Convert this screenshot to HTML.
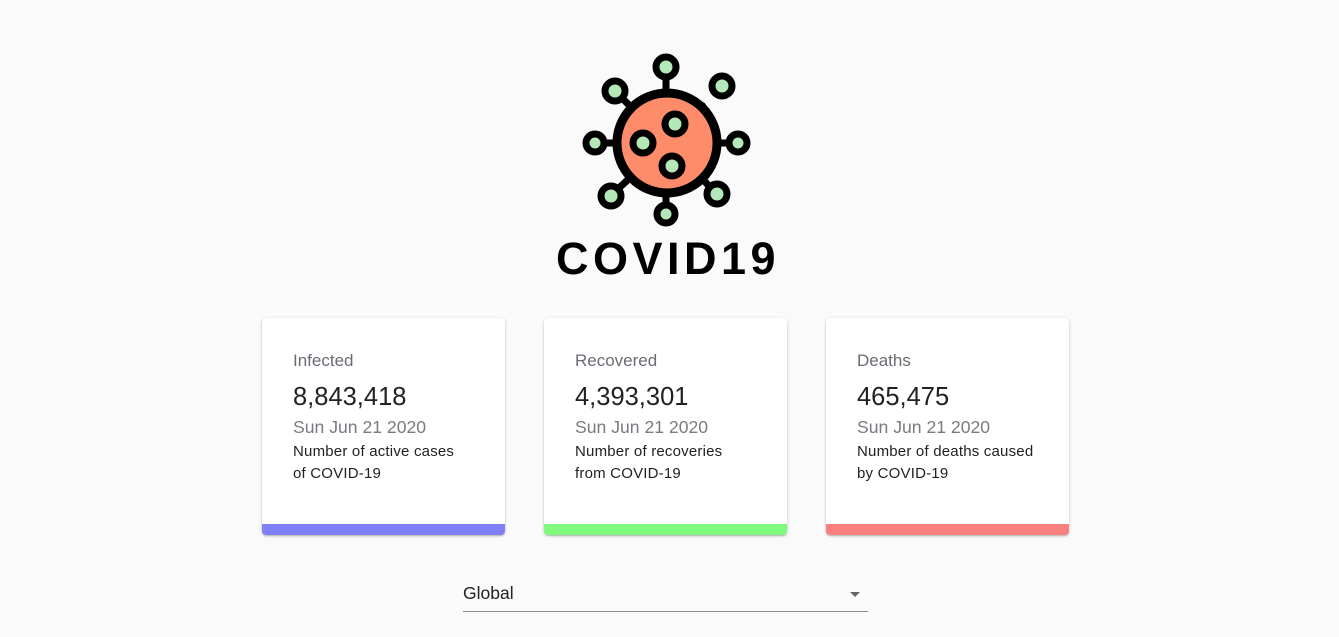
<!DOCTYPE html>
<html><head><style>
body{margin:0;background:#fafafa;font-family:"Liberation Sans",Roboto,sans-serif;width:1339px;height:637px;overflow:hidden;position:relative}
.card{position:absolute;top:318px;width:243px;height:217px;background:#fff;border-radius:4px;box-shadow:0 1px 3px rgba(0,0,0,.2),0 1px 1px rgba(0,0,0,.14);overflow:hidden}
.card .in{padding:33px 31px 0}
.t{color:#6b6b74;font-size:17px;line-height:20px}
.n{color:#222;font-size:25.5px;margin-top:12px;line-height:28px}
.d{color:#7a7a80;font-size:17.6px;margin-top:6px;line-height:20px}
.s{color:#222;font-size:15px;line-height:22px;margin-top:4px;letter-spacing:.2px}
.bar{position:absolute;left:0;right:0;bottom:0;height:11px}
</style></head><body>
<svg width="1339" height="300" style="position:absolute;left:0;top:0">
<g stroke="#000" stroke-width="7" stroke-linecap="round" fill="none">
<line x1="666" y1="80" x2="666" y2="93"/><line x1="624" y1="100" x2="635" y2="111"/>
<line x1="607" y1="143" x2="617" y2="143"/><line x1="717" y1="143" x2="727" y2="143"/>
<line x1="620" y1="187" x2="632" y2="176"/><line x1="708" y1="185" x2="700" y2="176"/>
<line x1="666" y1="193" x2="666" y2="202"/>
</g>
<circle cx="667" cy="143" r="50" fill="#fe8c6a" stroke="#000" stroke-width="9"/>
<g fill="#b4e8b8" stroke="#000" stroke-width="7">
<circle cx="666" cy="67" r="10"/><circle cx="722" cy="86" r="10"/><circle cx="615" cy="91" r="10"/>
<circle cx="595" cy="143" r="9"/><circle cx="738" cy="143" r="9"/><circle cx="611" cy="196" r="10"/>
<circle cx="717" cy="194" r="10"/><circle cx="666" cy="214" r="9"/>
<circle cx="675" cy="124" r="10"/><circle cx="643" cy="143" r="10"/><circle cx="672" cy="166" r="10"/>
</g>
<circle cx="702" cy="106" r="4" fill="#000"/>
<text x="668" y="274" text-anchor="middle" font-family="Liberation Sans" font-weight="bold" font-size="45" letter-spacing="4.5" fill="#000">COVID19</text>
</svg>
<div class="card" style="left:262px"><div class="in"><div class="t">Infected</div><div class="n">8,843,418</div><div class="d">Sun Jun 21 2020</div><div class="s">Number of active cases<br>of COVID-19</div></div><div class="bar" style="background:#7f7ffa"></div></div>
<div class="card" style="left:544px"><div class="in"><div class="t">Recovered</div><div class="n">4,393,301</div><div class="d">Sun Jun 21 2020</div><div class="s">Number of recoveries<br>from COVID-19</div></div><div class="bar" style="background:#7ffa7f"></div></div>
<div class="card" style="left:826px"><div class="in"><div class="t">Deaths</div><div class="n">465,475</div><div class="d">Sun Jun 21 2020</div><div class="s">Number of deaths caused<br>by COVID-19</div></div><div class="bar" style="background:#fa7f7f"></div></div>
<div style="position:absolute;left:463px;top:583px;width:405px;height:28px;border-bottom:1px solid #8a8a8a;font-size:17.5px;color:#222">Global
<div style="position:absolute;right:8px;top:9px;width:0;height:0;border-left:5px solid transparent;border-right:5px solid transparent;border-top:5px solid #666"></div></div>
</body></html>
